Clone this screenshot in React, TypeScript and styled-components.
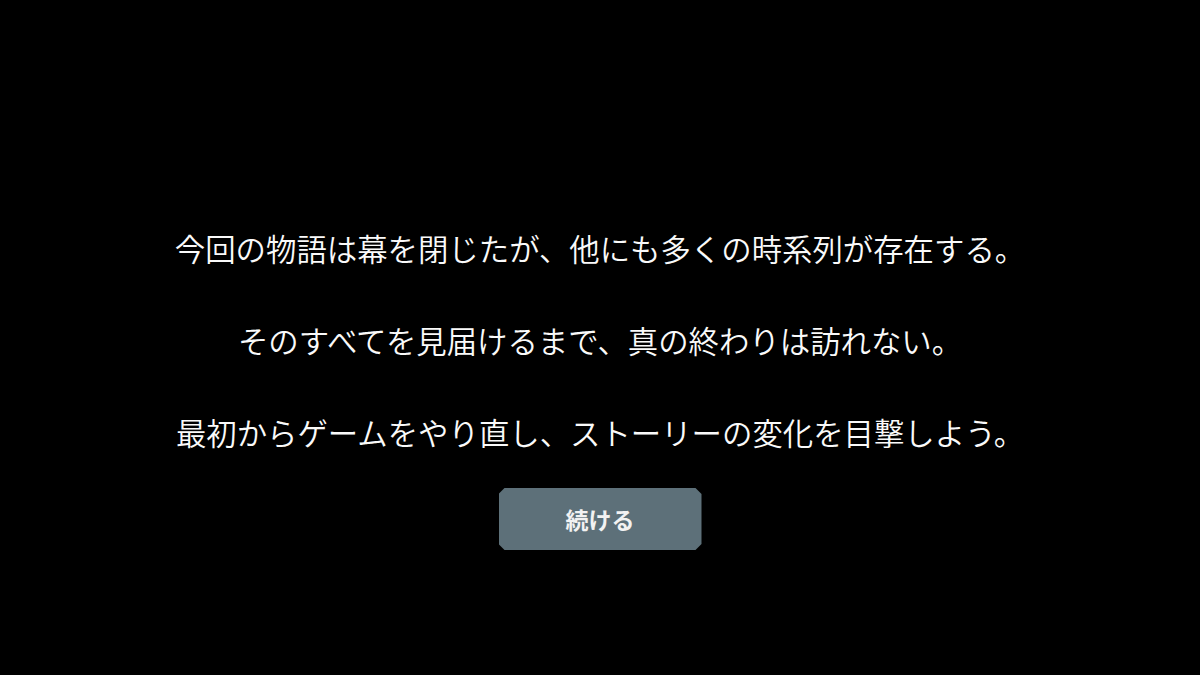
import React from 'react';
import styled, { createGlobalStyle } from 'styled-components';

const GlobalStyle = createGlobalStyle`
  html, body {
    margin: 0;
    padding: 0;
    background: #000;
  }

  body {
    font-family: 'Noto Sans CJK JP', 'Noto Sans', sans-serif;
  }
`;

const Screen = styled.main`
  width: 1200px;
  height: 675px;
  box-sizing: border-box;
  padding-top: 226px;
  display: flex;
  flex-direction: column;
  align-items: center;
  background: #000;
`;

const Lines = styled.div`
  display: flex;
  flex-direction: column;
  align-items: center;
  gap: 48px;
`;

const Line = styled.p`
  margin: 0;
  font-size: 30.4px;
  line-height: 44px;
  font-weight: 350;
  color: #fafafa;
  white-space: nowrap;
`;

const ContinueButton = styled.button`
  margin-top: 34px;
  width: 203px;
  height: 62px;
  border: none;
  padding: 0;
  background: #5d7079;
  color: #f2f2f2;
  font-family: inherit;
  font-size: 23px;
  font-weight: 700;
  cursor: pointer;
  clip-path: polygon(
    6px 0,
    calc(100% - 6px) 0,
    100% 6px,
    100% calc(100% - 6px),
    calc(100% - 6px) 100%,
    6px 100%,
    0 calc(100% - 6px),
    0 6px
  );
`;

const MESSAGES = [
  '今回の物語は幕を閉じたが、他にも多くの時系列が存在する。',
  'そのすべてを見届けるまで、真の終わりは訪れない。',
  '最初からゲームをやり直し、ストーリーの変化を目撃しよう。',
];

export default function App() {
  return (
    <>
      <GlobalStyle />
      <Screen>
        <Lines>
          {MESSAGES.map((text) => (
            <Line key={text}>{text}</Line>
          ))}
        </Lines>
        <ContinueButton>続ける</ContinueButton>
      </Screen>
    </>
  );
}
